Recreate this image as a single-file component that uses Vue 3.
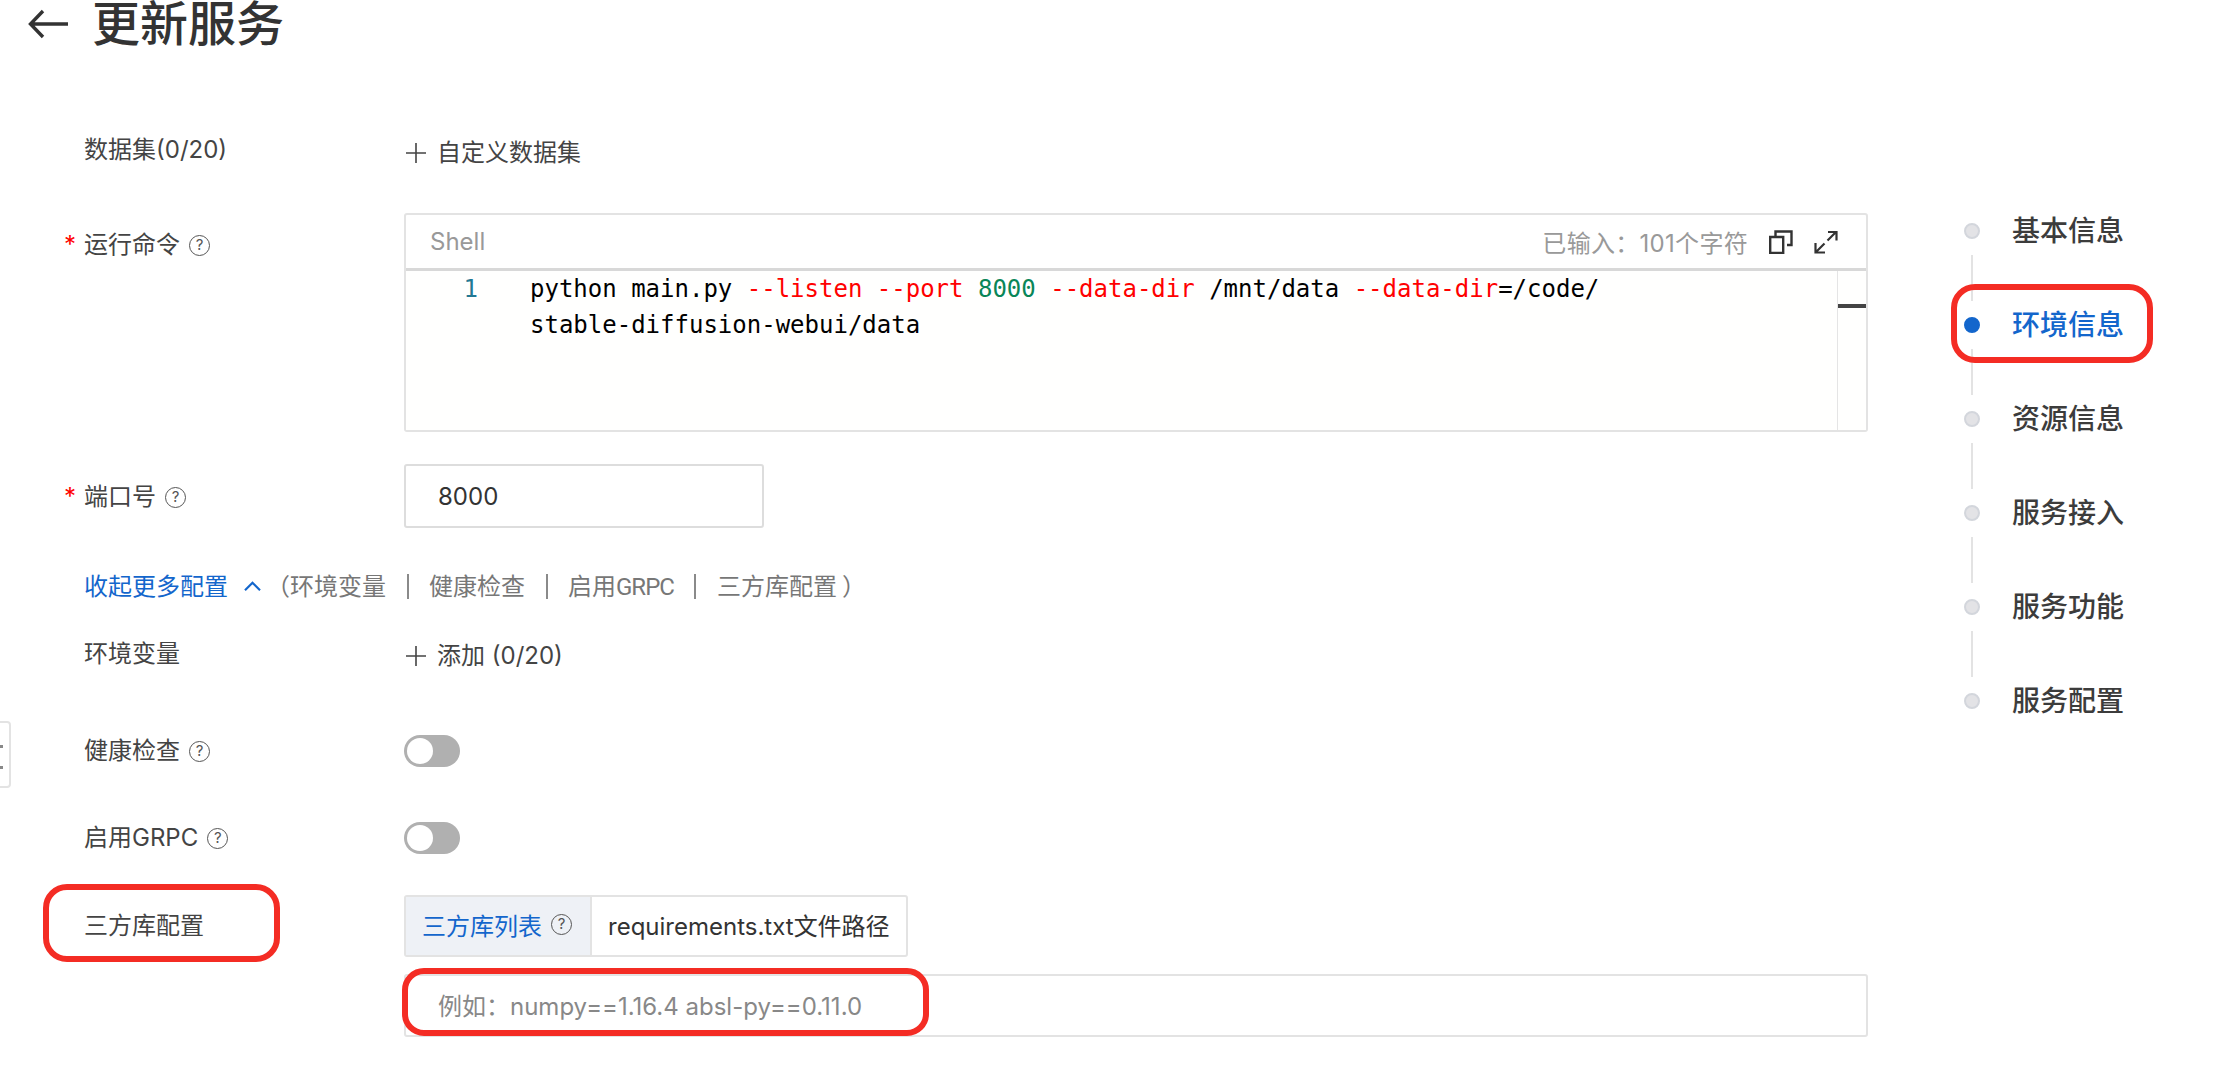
<script setup>
const steps = [
  { name: '基本信息' },
  { name: '环境信息', active: true },
  { name: '资源信息' },
  { name: '服务接入' },
  { name: '服务功能' },
  { name: '服务配置' }
]
const cmd = [
  { t: 'python main.py ', c: 'plain' },
  { t: '--listen', c: 'flag' },
  { t: ' ', c: 'plain' },
  { t: '--port', c: 'flag' },
  { t: ' ', c: 'plain' },
  { t: '8000', c: 'num' },
  { t: ' ', c: 'plain' },
  { t: '--data-dir', c: 'flag' },
  { t: ' /mnt/data ', c: 'plain' },
  { t: '--data-dir', c: 'flag' },
  { t: '=/code/', c: 'plain' }
]
</script>

<template>
  <div class="page">
    <div class="edge-tab"><i></i><i></i></div>
    <header class="head">
      <svg class="back" viewBox="0 0 40 32" width="40" height="32" fill="none" stroke="#333" stroke-width="3.4">
        <path d="M40 16H3M15 3 2.5 16 15 29" />
      </svg>
      <h1>更新服务</h1>
    </header>

    <div class="body">
      <form class="form" @submit.prevent>
        <div class="row r-data">
          <label class="lab">数据集(0/20)</label>
          <div class="add">
            <svg viewBox="0 0 20 20" width="20" height="20" stroke="#444" stroke-width="1.6"><path d="M10 0v20M0 10h20" /></svg>
            <span>自定义数据集</span>
          </div>
        </div>

        <div class="row r-cmd">
          <label class="lab req">运行命令<i class="q">?</i></label>
          <div class="editor">
            <div class="ed-head">
              <span class="lang">Shell</span>
              <span class="count">已输入：101个字符</span>
              <svg class="ic" viewBox="0 0 24 24" width="24" height="24" fill="none" stroke="#333" stroke-width="2.4">
                <path d="M1.2 7h13v16H1.2zM6.5 6V1.5h16V15H18" />
              </svg>
              <svg class="ic" viewBox="0 0 24 24" width="24" height="24" fill="none" stroke="#333" stroke-width="2.2">
                <path d="M22 2 13.5 10.5M10.5 13.5 2 22M14 2h8.5v8.5M1.5 13v9.5H11" />
              </svg>
            </div>
            <div class="ed-body">
              <div class="gutter">1</div>
              <div class="code">
                <div class="line"><span v-for="(p, i) in cmd" :key="i" :class="p.c">{{ p.t }}</span></div>
                <div class="line plain">stable-diffusion-webui/data</div>
              </div>
              <div class="mini"><b></b></div>
            </div>
          </div>
        </div>

        <div class="row r-port">
          <label class="lab req">端口号<i class="q">?</i></label>
          <div class="input port">8000</div>
        </div>

        <div class="row r-more">
          <span class="link">收起更多配置</span>
          <svg class="chev" viewBox="0 0 17 10" width="17" height="10" fill="none" stroke="#1366cc" stroke-width="2.2"><path d="M1 9.2 8.5 1.8 16 9.2" /></svg>
          <div class="hint">
            <span>（环境变量</span><i></i>
            <span>健康检查</span><i></i>
            <span>启用<em>GRPC</em></span><i></i>
            <span>三方库配置</span><span class="close">）</span>
          </div>
        </div>

        <div class="row r-env">
          <label class="lab">环境变量</label>
          <div class="add">
            <svg viewBox="0 0 20 20" width="20" height="20" stroke="#444" stroke-width="1.6"><path d="M10 0v20M0 10h20" /></svg>
            <span>添加 (0/20)</span>
          </div>
        </div>

        <div class="row r-health">
          <label class="lab">健康检查<i class="q">?</i></label>
          <div class="switch"><b></b></div>
        </div>

        <div class="row r-grpc">
          <label class="lab">启用GRPC<i class="q">?</i></label>
          <div class="switch"><b></b></div>
        </div>

        <div class="row r-lib">
          <label class="lab">三方库配置</label>
          <div class="tabs">
            <div class="tab on">三方库列表<i class="q">?</i></div>
            <div class="tab">requirements.txt文件路径</div>
          </div>
          <span class="mark m-label"></span>
        </div>

        <div class="row r-text">
          <div class="spacer"></div>
          <div class="input area">例如：numpy==1.16.4 absl-py==0.11.0</div>
          <span class="mark m-input"></span>
        </div>
      </form>

      <nav class="steps">
        <div v-for="(s, i) in steps" :key="s.name" class="step" :class="{ active: s.active }">
          <span class="dot"></span>
          <span class="name">{{ s.name }}</span>
          <span v-if="i < steps.length - 1" class="conn"></span>
          <span v-if="s.active" class="mark m-step"></span>
        </div>
      </nav>
    </div>
  </div>
</template>

<style>
html, body { margin: 0; background: #fff; overflow: hidden; }
</style>

<style scoped>
.page {
  position: relative;
  width: 2238px;
  height: 1076px;
  overflow: hidden;
  background: #fff;
  font-family: "Inter", "Noto Sans CJK SC", sans-serif;
  color: #444;
  font-size: 24px;
}
.edge-tab {
  position: absolute;
  left: -4px;
  top: 721px;
  width: 15px;
  height: 67px;
  box-sizing: border-box;
  border: 2px solid #e3e3e3;
  border-radius: 4px;
  background: #fff;
}
.edge-tab i { position: absolute; left: 2px; top: 22px; width: 3px; height: 3px; background: #888; }
.edge-tab i + i { top: 43px; }
.head {
  display: flex;
  align-items: center;
  height: 48px;
  padding-left: 28px;
}
.back { flex: none; }
h1 {
  margin: 0 0 0 24px;
  font-size: 48px;
  line-height: 48px;
  font-weight: 500;
  color: #333;
}
.body { display: flex; align-items: flex-start; }
.form { width: 1868px; flex: none; padding-left: 84px; box-sizing: border-box; padding-top: 85px; }
.row { position: relative; display: flex; align-items: flex-start; }
.lab {
  position: relative;
  width: 320px;
  flex: none;
  line-height: 34px;
  display: flex;
  align-items: center;
  color: #444;
}
.req::before {
  content: "*";
  position: absolute;
  left: -20px;
  top: 0;
  color: #f00;
  font-size: 24px;
}
.q {
  flex: none;
  box-sizing: border-box;
  width: 21px;
  height: 21px;
  margin-left: 9px;
  border: 1.6px solid #555;
  border-radius: 50%;
  font: normal 15px/18px "Inter", sans-serif;
  text-align: center;
  color: #555;
}
.add { display: flex; align-items: center; gap: 11px; line-height: 34px; color: #444; margin-top: 3px; padding-left: 2px; }
.r-data { height: 80px; }
.r-cmd { height: 251px; }
.r-cmd .lab { margin-top: 15px; }
.editor {
  width: 1464px;
  height: 219px;
  box-sizing: border-box;
  border: 2px solid #e3e3e3;
  border-radius: 3px;
  display: flex;
  flex-direction: column;
}
.ed-head {
  flex: none;
  height: 56px;
  box-sizing: border-box;
  border-bottom: 3px solid #d8d8d8;
  display: flex;
  align-items: center;
  padding: 0 28px 0 24px;
  color: #999;
}
.lang { flex: 1; }
.count { margin-right: 21px; letter-spacing: .3px; }
.ic + .ic { margin-left: 21px; }
.ed-body { flex: 1; display: flex; min-height: 0; background: #fffffe; }
.gutter { width: 124px; flex: none; box-sizing: border-box; padding-right: 52px; text-align: right; color: #237893; font: 24px/36px "DejaVu Sans Mono", monospace; }
.code { flex: 1; font: 24px/36px "DejaVu Sans Mono", monospace; color: #000; white-space: pre; }
.flag { color: #f00; }
.num { color: #098658; }
.plain { color: #000; }
.mini { width: 28px; flex: none; border-left: 1px solid #e5e5e5; position: relative; }
.mini b { position: absolute; left: 0; right: 0; top: 33px; height: 4px; background: #444; }
.r-port { height: 98px; }
.r-port .lab { margin-top: 16px; }
.input {
  box-sizing: border-box;
  border: 2px solid #ddd;
  border-radius: 3px;
  display: flex;
  align-items: center;
  padding-left: 32px;
}
.port { width: 360px; height: 64px; color: #333; padding-top: 1px; }
.r-more { align-items: center; height: 44px; margin-bottom: 31px; }
.link { color: #1366cc; }
.chev { margin: 4px 5px 0 16px; flex: none; }
.hint { display: flex; align-items: center; color: #777; }
.hint i { width: 2px; height: 25px; margin: 4px 20.5px 0; background: #8a8a8a; }
.hint em { font: normal 24px "Roboto", sans-serif; letter-spacing: -1px; }
.close { margin-left: 5px; }
.r-env { height: 98px; }
.r-env .add { margin-top: 2px; }
.switch {
  position: relative;
  width: 56px;
  height: 32px;
  border-radius: 16px;
  background: #b0b0b0;
}
.switch b { position: absolute; left: 3px; top: 3px; width: 26px; height: 26px; border-radius: 50%; background: #fff; }
.r-health { align-items: center; height: 32px; margin-bottom: 55px; }
.r-grpc { align-items: center; height: 32px; margin-bottom: 41px; }
.r-lib { height: 79px; }
.r-lib .lab { margin-top: 14px; }
.tabs {
  box-sizing: border-box;
  height: 62px;
  display: flex;
  border: 2px solid #e3e3e3;
  border-radius: 3px;
}
.tab { display: flex; align-items: center; padding: 0 16px 3px; color: #333; }
.tab.on { background: #eef1f6; color: #1366cc; border-right: 2px solid #e3e3e3; padding-right: 18px; }
.spacer { width: 320px; flex: none; }
.area { flex: 1; height: 63px; color: #888; border-color: #e3e3e3; padding-bottom: 3px; }
.mark {
  position: absolute;
  box-sizing: border-box;
  border: 6px solid #f42c24;
  pointer-events: none;
}
.m-label { left: -41px; top: -11px; width: 237px; height: 78px; border-radius: 24px; }
.m-input { left: 318px; top: -6px; width: 527px; height: 68px; border-radius: 22px; }
.steps { flex: 1; padding-top: 167px; }
.step { position: relative; height: 94px; display: flex; align-items: flex-start; }
.dot {
  position: absolute;
  left: 96px;
  top: 8px;
  width: 16px;
  height: 16px;
  box-sizing: border-box;
  border-radius: 50%;
  background: #e3e3e6;
  border: 2px solid #d3d6dc;
}
.active .dot { background: #1366cc; border-color: #1366cc; }
.name { margin-left: 144px; font-size: 28px; line-height: 34px; font-weight: 500; color: #3c3c3c; margin-top: -1px; }
.active .name { color: #1366cc; }
.conn { position: absolute; left: 103px; top: 40px; width: 2px; height: 46px; background: #e3e3e3; }
.m-step { left: 83px; top: -25px; width: 202px; height: 79px; border-radius: 24px; }
</style>
